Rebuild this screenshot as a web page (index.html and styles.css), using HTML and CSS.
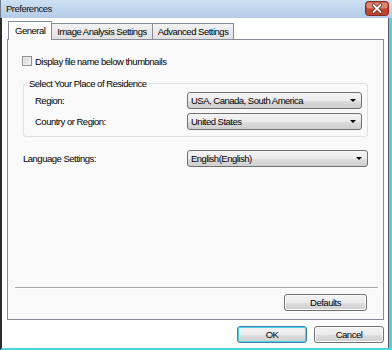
FILE: index.html
```html
<!DOCTYPE html>
<html lang="en">
<head>
  <meta charset="UTF-8">
  <meta name="viewport" content="width=device-width, initial-scale=1.0">
  <title>Preferences</title>
  <link rel="stylesheet" href="styles.css">
</head>
<body>

  <div class="window">
    <div class="title-bar">
      <span class="title">Preferences</span>
      <span class="close-btn">
        <svg width="24" height="15" viewBox="0 0 24 15">
          <rect x="0.5" y="0.5" width="23" height="14" rx="3" fill="#c4432b" stroke="#7a2c1e"/>
          <rect x="1.5" y="1.5" width="21" height="6" rx="2" fill="#dd8670"/>
          <path d="M8.5 4 L15.5 11 M15.5 4 L8.5 11" stroke="#4e1d15" stroke-width="3.4" stroke-linecap="round"/>
          <path d="M8.5 4 L15.5 11 M15.5 4 L8.5 11" stroke="#FFF" stroke-width="1.9" stroke-linecap="round"/>
        </svg>
      </span>
    </div>

    <div class="window-body">
      <div class="tabs">
        <div class="tab active">General</div>
        <div class="tab">Image Analysis Settings</div>
        <div class="tab">Advanced Settings</div>
      </div>

      <div class="panel">
        <label class="check-row">
          <span class="checkbox"></span>
          Display file name below thumbnails
        </label>

        <fieldset class="group">
          <legend>Select Your Place of Residence</legend>
          <div class="field-row">
            <span class="field-label">Region:</span>
            <div class="select">
              <span>USA, Canada, South America</span>
              <span class="arrow"></span>
            </div>
          </div>
          <div class="field-row">
            <span class="field-label">Country or Region:</span>
            <div class="select">
              <span>United States</span>
              <span class="arrow"></span>
            </div>
          </div>
        </fieldset>

        <div class="field-row language-row">
          <span class="field-label">Language Settings:</span>
          <div class="select">
            <span>English(English)</span>
            <span class="arrow"></span>
          </div>
        </div>

        <div class="panel-footer">
          <div class="separator"></div>
          <button class="btn defaults-btn">Defaults</button>
        </div>
      </div>

      <div class="dialog-buttons">
        <button class="btn ok-btn">OK</button>
        <button class="btn">Cancel</button>
      </div>
    </div>
  </div>

</body>
</html>
```

FILE: styles.css
```css
body {
  margin: 0;
  padding: 0;
  background-color: #FFF;
  font-family: "Liberation Sans", Arial, sans-serif;
  font-size: 9.5px;
  letter-spacing: -0.5px;
  color: #000;
}

.window {
  width: 392px;
  height: 350px;
}

.title-bar {
  height: 18px;
  box-sizing: border-box;
  display: flex;
  justify-content: space-between;
  align-items: flex-start;
  padding: 1px 3px 0 5px;
  border-left: 1px solid #6f7c8c;
  background-color: #bed3ec;
  background-image: linear-gradient(#cddff3, #b4cbe8);
}

.title {
  line-height: 16px;
  color: #111;
}

.close-btn {
  display: block;
  height: 15px;
}

.close-btn svg {
  display: block;
}

.window-body {
  height: 332px;
  box-sizing: border-box;
  padding: 3px 5px 0 5px;
  border-left: 2px solid #2b2b2b;
  border-right: 3px solid #48d6e2;
  border-bottom: 2px solid #48d6e2;
  box-shadow: inset -1px 0 0 #5c5c5c;
  background-color: #FFF;
}

/* tabs */

.tabs {
  display: flex;
  align-items: flex-end;
  height: 18px;
  margin-left: 1px;
}

.tab {
  height: 16px;
  box-sizing: border-box;
  padding: 0 5px;
  margin-left: -1px;
  line-height: 15px;
  border: 1px solid #898c95;
  border-bottom: none;
  background: linear-gradient(#f2f2f2, #e0e0e0);
}

.tab.active {
  height: 19px;
  margin-left: 0;
  margin-bottom: -1px;
  padding: 0 6px;
  line-height: 17px;
  background: linear-gradient(#FFF, #f9f9f9);
  position: relative;
  z-index: 1;
}

.panel {
  height: 281px;
  box-sizing: border-box;
  display: flex;
  flex-direction: column;
  border: 1px solid #898c95;
  background-color: #f9f9f9;
  padding-bottom: 8px;
}

.check-row {
  display: flex;
  align-items: center;
  gap: 3px;
  height: 10px;
  margin: 16px 0 0 14px;
}

.checkbox {
  width: 10px;
  height: 10px;
  box-sizing: border-box;
  border: 1px solid #8e8f8f;
  background: linear-gradient(135deg, #d6d6d6, #f4f4f4);
  box-shadow: inset 0 0 0 1px #eeeeee;
}

/* group box */

.group {
  margin: 12px 15px 0 15px;
  padding: 3px 5px 6px 0;
  min-width: 0;
  border: 1px solid #dcdfe3;
  border-radius: 3px;
  display: flex;
  flex-direction: column;
  gap: 4px;
}

.group legend {
  margin-left: 3px;
  padding: 0 2px;
  line-height: 11px;
}

.field-row {
  display: flex;
  align-items: center;
  height: 17px;
  padding-left: 11px;
}

.field-label {
  width: 152px;
}

.select {
  flex: 1;
  height: 17px;
  box-sizing: border-box;
  display: flex;
  align-items: center;
  justify-content: space-between;
  padding: 0 5px 0 3px;
  border: 1px solid #707070;
  border-radius: 3px;
  background: linear-gradient(#f3f3f3 0%, #ebebeb 50%, #dddddd 51%, #cfcfcf 100%);
}

.arrow {
  width: 0;
  height: 0;
  border-left: 3px solid transparent;
  border-right: 3px solid transparent;
  border-top: 3px solid #000;
}

.language-row {
  margin: 13px 15px 0 15px;
  padding-left: 0;
}

.language-row .field-label {
  width: 164px;
}

/* footer */

.panel-footer {
  margin-top: auto;
  display: flex;
  flex-direction: column;
}

.separator {
  margin: 0 5px 0 7px;
  border-top: 1px solid #a9a9a9;
  border-bottom: 1px solid #FFF;
}

.btn {
  height: 17px;
  box-sizing: border-box;
  padding: 0;
  font-family: "Liberation Sans", Arial, sans-serif;
  font-size: 9.5px;
  letter-spacing: -0.5px;
  color: #000;
  border: 1px solid #707070;
  border-radius: 3px;
  background: linear-gradient(#f2f2f2 0%, #ebebeb 50%, #dddddd 51%, #cfcfcf 100%);
  box-shadow: inset 0 0 0 1px #fcfcfc;
}

.defaults-btn {
  align-self: flex-end;
  width: 83px;
  margin: 5px 16px 0 0;
}

.dialog-buttons {
  display: flex;
  justify-content: flex-end;
  gap: 7px;
  margin-top: 6px;
}

.dialog-buttons .btn {
  width: 70px;
}

.ok-btn {
  border-color: #3c7fb1;
  box-shadow: inset 0 0 0 1px #48d6e2;
}
```
